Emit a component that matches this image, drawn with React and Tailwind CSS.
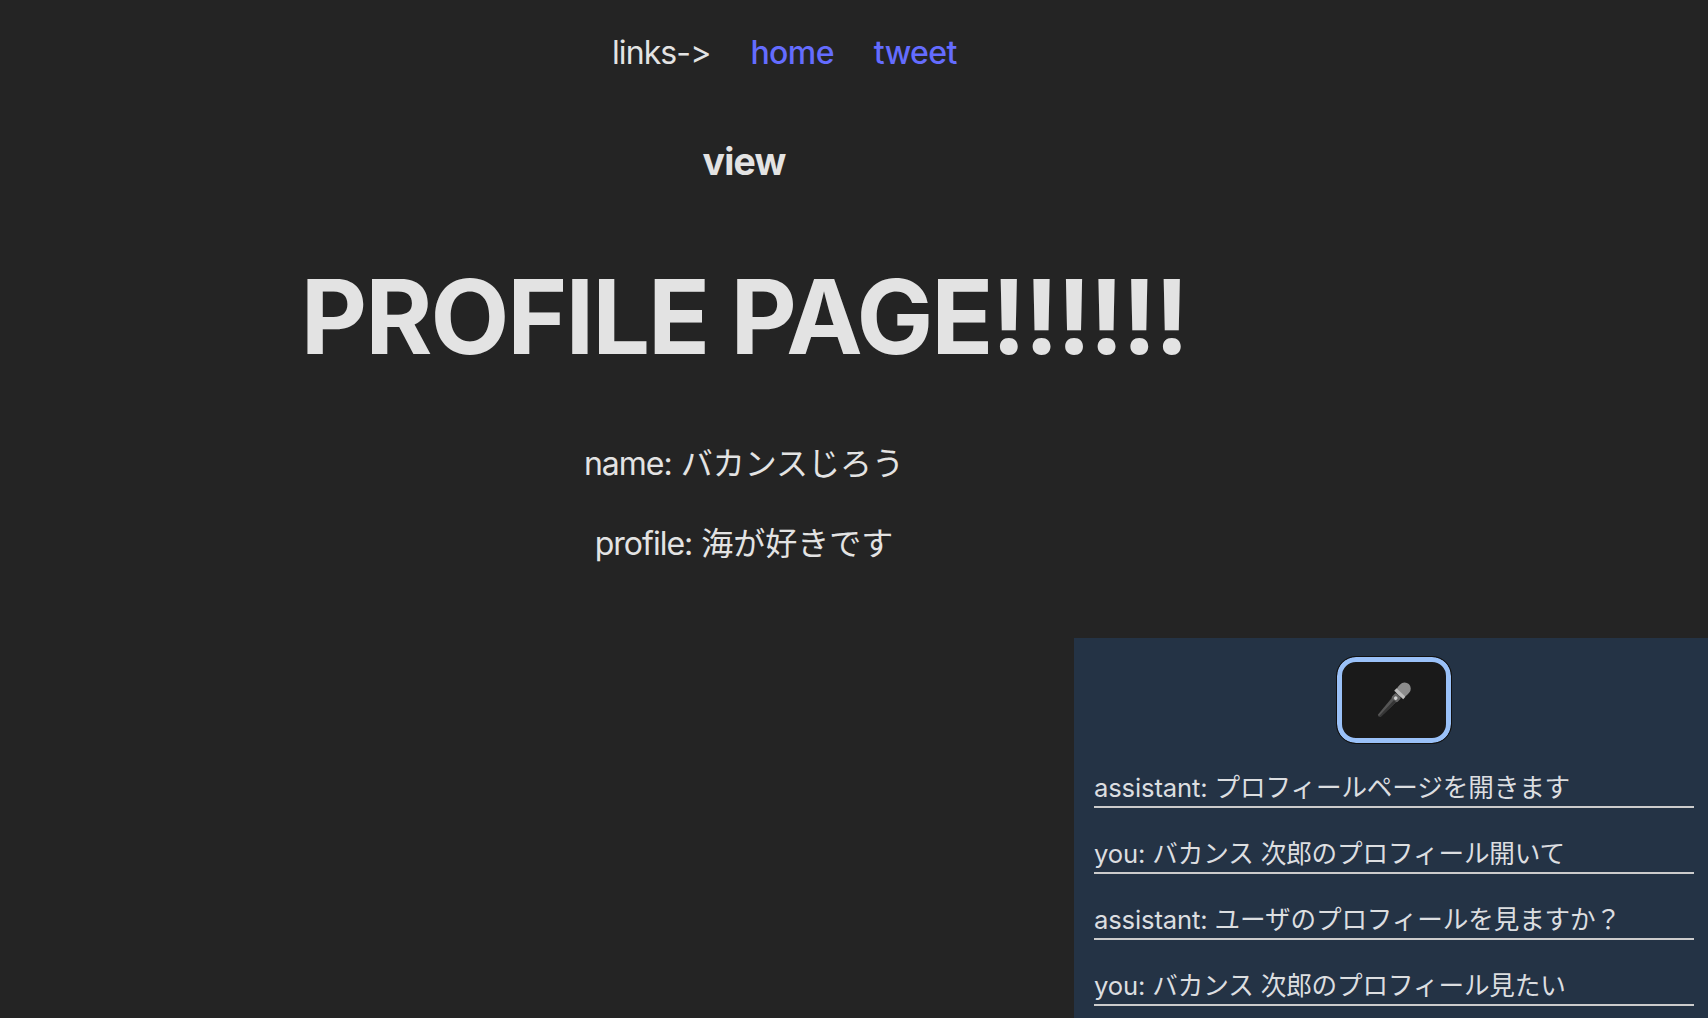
const messages = [
  'assistant: プロフィールページを開きます',
  'you: バカンス 次郎のプロフィール開いて',
  'assistant: ユーザのプロフィールを見ますか？',
  'you: バカンス 次郎のプロフィール見たい',
]

function MicIcon() {
  return (
    <svg width="46" height="46" viewBox="0 0 36 36" fill="none">
      <g transform="rotate(43 18 18)">
        <path d="M15.4 14 L20.6 14 L19.4 35 Q18 36 16.6 35 Z" fill="#565656" />
        <path d="M18 14 L20.6 14 L19.4 35 Q18.7 35.6 18 35.6 Z" fill="#363636" />
        <rect x="13.2" y="1" width="9.6" height="12" rx="4.8" fill="#8c8c8c" />
        <rect x="13.2" y="10" width="9.6" height="2.6" fill="#bdbdbd" />
        <rect x="15" y="13" width="6" height="5" rx="1" fill="#666666" />
        <circle cx="18" cy="16" r="1.4" fill="#d0d0d0" />
      </g>
    </svg>
  )
}

export default function App() {
  return (
    <div className="relative h-screen w-full overflow-hidden bg-[#242424] font-['Inter','Noto_Sans_CJK_JP',sans-serif] text-[32px] leading-normal text-[#e3e3e3] [font-feature-settings:'calt'_0]">
      {/* Nav */}
      <nav className="flex gap-10 pl-[612px] pt-[29px] tracking-[-0.6px]">
        <span className="tracking-[-0.9px]">links-&gt;</span>
        <a href="#" className="font-medium text-[#646cff]">home</a>
        <a href="#" className="font-medium text-[#646cff]">tweet</a>
      </nav>

      {/* Profile */}
      <main className="w-[1488px] pt-[57px] text-center">
        <h3 className="text-[37.44px] font-bold tracking-[-0.8px]">view</h3>
        <h1 className="mt-[71px] text-[102.4px] font-bold leading-[1.1] tracking-[-2px]">PROFILE PAGE!!!!!!</h1>
        <p className="mt-[66px]"><span className="tracking-[-1px]">name:</span> バカンスじろう</p>
        <p className="mt-8"><span className="tracking-[-1px]">profile:</span> 海が好きです</p>
      </main>

      {/* Voice chat panel */}
      <aside className="fixed bottom-0 right-0 top-[638px] w-[634px] bg-[#243345] pl-5 pr-[14px] pt-[18px] text-[25.6px] tracking-[-0.13px] text-[#dcdee0]">
        <div className="flex justify-center">
          <button className="flex h-[88px] w-[116px] items-center justify-center rounded-[20px] border border-[#111111] bg-[#1a1a1a] shadow-[inset_0_0_0_5px_#9ac1f8]">
            <MicIcon />
          </button>
        </div>
        <ul className="mt-[25px] flex flex-col gap-[26.6px]">
          {messages.map((m, i) => (
            <li key={i} className="border-b-2 border-[#cccccc] leading-[37.4px]">{m}</li>
          ))}
        </ul>
      </aside>
    </div>
  )
}
